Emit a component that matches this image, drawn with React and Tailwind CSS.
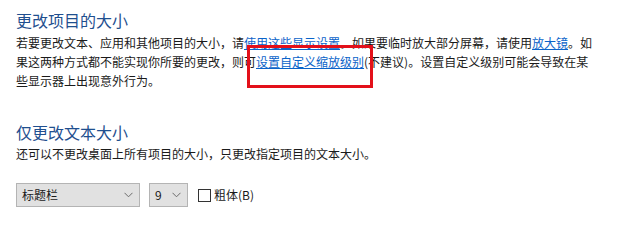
import React from 'react';

const FONT = { fontFamily: '"Microsoft YaHei", "Noto Sans CJK SC", "Noto Sans", sans-serif' };

function Chevron() {
  return (
    <svg width="9" height="6" viewBox="0 0 9 6" className="shrink-0">
      <path d="M0.5 0.8 L4.5 4.8 L8.5 0.8" fill="none" stroke="#6b6b6b" strokeWidth="1" />
    </svg>
  );
}

function Select({ value, width }) {
  return (
    <div
      className={`flex h-[24px] items-center justify-between border border-[#b4b4b4] bg-[#e1e1e1] pl-[5px] pr-[6px] text-[12px] text-[#1a1a1a] ${width}`}
    >
      <span>{value}</span>
      <Chevron />
    </div>
  );
}

export default function App() {
  return (
    <div className="relative h-[227px] w-[625px] overflow-hidden bg-white" style={FONT}>
      <div className="pl-[16px] pt-[8px]">
        <h2 className="h-[25px] text-[16px] leading-[24px] font-normal text-[#1f4f8f]">更改项目的大小</h2>
        <p className="w-[580px] text-[12px] leading-[19px] text-[#1a1a1a]">
          若要更改文本、应用和其他项目的大小，请
          <a className="text-[#0a63c9] underline">使用这些显示设置</a>
          。如果要临时放大部分屏幕，请使用
          <a className="text-[#0a63c9] underline">放大镜</a>
          。如果这两种方式都不能实现你所要的更改，则可
          <a className="text-[#0a63c9] underline">设置自定义缩放级别</a>
          (不建议)。设置自定义级别可能会导致在某些显示器上出现意外行为。
        </p>

        <h2 className="mt-[30px] h-[24px] text-[16px] leading-[24px] font-normal text-[#1f4f8f]">仅更改文本大小</h2>
        <p className="text-[12px] leading-[19px] text-[#1a1a1a]">
          还可以不更改桌面上所有项目的大小，只更改指定项目的文本大小。
        </p>

        <div className="mt-[20px] flex items-center">
          <Select value="标题栏" width="w-[124px]" />
          <div className="ml-[9px]">
            <Select value="9" width="w-[39px]" />
          </div>
          <label className="ml-[10px] flex items-center text-[12px] text-[#1a1a1a]">
            <span className="mr-[3px] h-[13px] w-[13px] border border-[#333333] bg-white" />
            粗体(B)
          </label>
        </div>
      </div>

      {/* red highlight box */}
      <div className="absolute left-[247px] top-[45px] h-[43px] w-[126px] border-[3px] border-[#e3101a]" />
    </div>
  );
}
